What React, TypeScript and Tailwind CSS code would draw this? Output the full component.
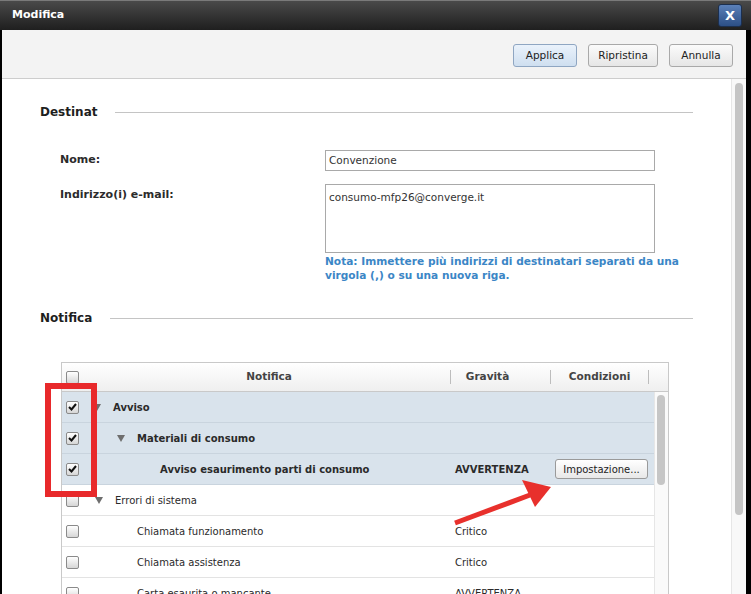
import React from 'react';

const font = { fontFamily: '"DejaVu Sans", Verdana, sans-serif' };

function Checkbox({ checked }: { checked?: boolean }) {
  return (
    <span className="w-[13px] h-[13px] border border-[#8a8a8a] rounded-[2px] bg-gradient-to-b from-[#ffffff] to-[#d6d6d6] flex items-center justify-center shrink-0">
      {checked && (
        <svg width="9" height="8" viewBox="0 0 9 8">
          <path d="M1 4 L3.5 6.5 L8 1" fill="none" stroke="#111" strokeWidth="2" />
        </svg>
      )}
    </span>
  );
}

function Triangle() {
  return (
    <svg width="8" height="7" viewBox="0 0 8 7" className="shrink-0">
      <path d="M0 0 H8 L4 7 Z" fill="#6e6e6e" />
    </svg>
  );
}

type Row = {
  label: string;
  indent: number;
  tri?: boolean;
  bold?: boolean;
  checked?: boolean;
  sel?: boolean;
  grav?: string;
  btn?: boolean;
};

const rows: Row[] = [
  { label: 'Avviso', indent: 5, tri: true, bold: true, checked: true, sel: true },
  { label: 'Materiali di consumo', indent: 29, tri: true, bold: true, checked: true, sel: true },
  { label: 'Avviso esaurimento parti di consumo', indent: 72, bold: true, checked: true, sel: true, grav: 'AVVERTENZA', btn: true },
  { label: 'Errori di sistema', indent: 7, tri: true },
  { label: 'Chiamata funzionamento', indent: 49, grav: 'Critico' },
  { label: 'Chiamata assistenza', indent: 49, grav: 'Critico' },
  { label: 'Carta esaurita o mancante', indent: 49, grav: 'AVVERTENZA' },
];

function ToolButton({ label, primary }: { label: string; primary?: boolean }) {
  return (
    <button
      className={
        'h-[23px] rounded-[3px] border text-[10.5px] text-[#222] flex items-center justify-center ' +
        (primary
          ? 'border-[#8fa6c2] bg-gradient-to-b from-[#eaf2fb] to-[#cfdff0]'
          : 'border-[#a9a9a9] bg-gradient-to-b from-[#fbfbfb] to-[#e6e6e6]')
      }
      style={{ ...font, width: label === 'Ripristina' ? 70 : 64 }}
    >
      {label}
    </button>
  );
}

function SectionHeading({ title }: { title: string }) {
  return (
    <div className="flex items-center h-[16px]">
      <span className="text-[12px] font-bold text-[#1e1e1e] leading-[16px]">{title}</span>
      <div className="flex-1 h-px bg-[#c4c4c4] ml-[18px]" />
    </div>
  );
}

export default function App() {
  return (
    <div className="relative w-[751px] h-[594px] bg-black overflow-hidden flex flex-col" style={font}>
      {/* title bar */}
      <div className="h-[30px] shrink-0 flex items-center justify-between pl-[12px] pr-[9px] bg-gradient-to-b from-[#4a4a4a] to-[#1f1f1f] border-t border-[#7a7a7a]">
        <span className="text-white font-bold text-[11px]">Modifica</span>
        <span className="w-[24px] h-[23px] rounded-[3px] border border-[#1c2f4e] bg-gradient-to-b from-[#5b80b8] to-[#2c4f86] flex items-center justify-center text-white font-bold text-[13px] leading-none">
          X
        </span>
      </div>

      <div className="flex flex-1 min-h-0 pl-[2px] pr-[5px]">
        <div className="flex-1 flex flex-col bg-white min-w-0">
          {/* toolbar */}
          <div className="h-[49px] shrink-0 bg-[#f3f3f3] border-b border-[#cdcdcd] flex justify-end items-start pt-[14px] pr-[13px] gap-[11px]">
            <ToolButton label="Applica" primary />
            <ToolButton label="Ripristina" />
            <ToolButton label="Annulla" />
          </div>

          <div className="flex flex-1 min-h-0">
            <div className="flex-1 min-w-0 px-[38px] pt-[25px] overflow-hidden">
              <SectionHeading title="Destinat" />

              <div className="pl-[20px] mt-[30px]">
                <div className="flex items-center">
                  <span className="w-[265px] text-[11px] font-bold text-[#2b2b2b]">Nome:</span>
                  <div className="w-[330px] h-[21px] border border-[#a9a9a9] flex items-center pl-[3px] text-[10.5px] text-[#333]">
                    Convenzione
                  </div>
                </div>
                <div className="flex items-start mt-[13px]">
                  <span className="w-[265px] text-[11px] font-bold text-[#2b2b2b] pt-[3px]">Indirizzo(i) e-mail:</span>
                  <div>
                    <div className="w-[330px] h-[69px] border border-[#a9a9a9] pl-[3px] pt-[5px] text-[10.5px] text-[#333]">
                      consumo-mfp26@converge.it
                    </div>
                    <p className="text-[10.6px] font-bold text-[#3b86c6] leading-[14px] pt-px whitespace-nowrap">
                      Nota: Immettere più indirizzi di destinatari separati da una
                      <br />
                      virgola (,) o su una nuova riga.
                    </p>
                  </div>
                </div>
              </div>

              <div className="mt-[28px]">
                <SectionHeading title="Notifica" />
              </div>

              {/* table */}
              <div className="ml-[21px] mt-[36px] w-[608px] border border-b-0 border-[#c9c9c9]">
                <div className="h-[29px] flex items-center bg-gradient-to-b from-[#ffffff] to-[#efefef] border-b border-[#c9c9c9] text-[10.5px] font-bold text-[#444]">
                  <div className="w-[26px] pl-[4px] flex"><Checkbox /></div>
                  <div className="w-[362px] text-center">Notifica</div>
                  <div className="w-px h-[14px] bg-[#bdbdbd]" />
                  <div className="w-[99px] text-center pr-[26px]">Gravità</div>
                  <div className="w-px h-[14px] bg-[#bdbdbd]" />
                  <div className="w-[97px] text-center">Condizioni</div>
                  <div className="w-px h-[14px] bg-[#bdbdbd]" />
                </div>

                <div className="flex">
                  <div className="flex-1">
                    {rows.map((r) => (
                      <div
                        key={r.label}
                        className={
                          'h-[31px] flex items-center border-b text-[10px] text-[#2a2a2a] ' +
                          (r.sel ? 'bg-[#d9e3ec] border-[#c9d4de]' : 'bg-white border-[#e3e3e3]') +
                          (r.bold ? ' font-bold' : '')
                        }
                      >
                        <div className="w-[26px] pl-[4px] flex"><Checkbox checked={r.checked} /></div>
                        <div className="w-[362px] flex items-center" style={{ paddingLeft: r.indent }}>
                          {r.tri && <Triangle />}
                          <span style={{ marginLeft: r.tri ? 12 : 0 }}>{r.label}</span>
                        </div>
                        <div className="w-[100px] pl-[5px]">{r.grav}</div>
                        <div className="w-[98px] pl-[5px] flex justify-end">
                          {r.btn && (
                            <button className="w-[93px] h-[20px] rounded-[3px] border border-[#9a9a9a] bg-gradient-to-b from-[#ffffff] to-[#e8e8e8] text-[10px] font-normal text-[#222] flex items-center justify-center">
                              Impostazione...
                            </button>
                          )}
                        </div>
                      </div>
                    ))}
                  </div>
                  <div className="w-[14px] bg-[#fafafa] border-l border-[#e6e6e6] pt-[3px] pl-[2px]">
                    <div className="w-[8px] h-[90px] rounded-full bg-[#c6c6c6]" />
                  </div>
                </div>
              </div>
            </div>

            {/* outer scrollbar */}
            <div className="w-[15px] shrink-0 bg-[#f8f8f8] border-l border-[#e6e6e6] pt-[4px] pl-[3px]">
              <div className="w-[8px] h-[432px] rounded-full bg-[#c4c4c4]" />
            </div>
          </div>
        </div>
      </div>

      {/* annotation: red box */}
      <div className="absolute left-[45px] top-[383px] w-[52px] h-[114px] border-[6px] border-[#e8292b]" />
      {/* annotation: red arrow */}
      <svg className="absolute left-0 top-0" width="751" height="594" viewBox="0 0 751 594">
        <line x1="455" y1="523" x2="530" y2="495" stroke="#e8302c" strokeWidth="5" />
        <polygon points="551,487 522,480 535,507" fill="#e8302c" />
      </svg>
    </div>
  );
}
